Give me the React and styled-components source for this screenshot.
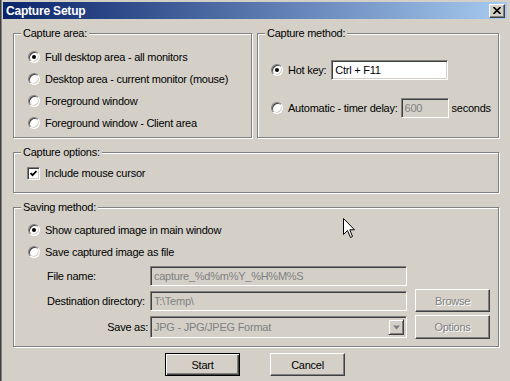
import styled, { createGlobalStyle } from "styled-components";

const GlobalStyle = createGlobalStyle`
	body {
		margin: 0;
		background: #d4d0c8;
	}
	* {
		box-sizing: border-box;
	}
`

const Window = styled.div`
	position: relative;
	width: 510px;
	height: 381px;
	overflow: hidden;
	background: #d4d0c8;
	padding-top: 2px;
	box-shadow: inset 1px 0 0 #404040, inset 2px 0 0 #808080;
	font-family: "Liberation Sans", Arial, sans-serif;
	font-size: 11px;
	letter-spacing: -0.25px;
	color: #000;
`

const TitleBar = styled.div`
	display: flex;
	align-items: center;
	justify-content: space-between;
	height: 17px;
	margin: 0 3px;
	padding: 0 2px 0 3px;
	background: linear-gradient(to right, #0a246a, #a6caf0);
`

const Title = styled.span`
	color: #fff;
	font-weight: bold;
	font-size: 12px;
	letter-spacing: -0.2px;
`

const CloseButton = styled.div`
	display: flex;
	align-items: center;
	justify-content: center;
	width: 16px;
	height: 14px;
	background: #d4d0c8;
	border: 1px solid;
	border-color: #fff #404040 #404040 #fff;
	box-shadow: inset -1px -1px 0 #808080;
`

const Body = styled.div`
	display: flex;
	flex-direction: column;
	gap: 14px;
	padding: 14px 0 0 13px;
`

const TopRow = styled.div`
	display: flex;
	gap: 5px;
`

const Group = styled.div`
	position: relative;
	width: ${props => props.w}px;
	height: ${props => props.h}px;
	padding: ${props => props.pad};
	border: 1px solid #808080;
	box-shadow: 1px 1px 0 #fff, inset 1px 1px 0 #fff;
`

const GroupLabel = styled.span`
	position: absolute;
	top: -7px;
	left: 7px;
	padding: 0 2px;
	line-height: 13px;
	background: #d4d0c8;
`

const OptionRow = styled.div`
	display: flex;
	align-items: center;
	height: 22px;
	gap: ${props => props.gap || 5}px;
	margin-top: ${props => props.mt || 0}px;
`

const Radio = styled.span`
	position: relative;
	flex: none;
	width: 12px;
	height: 12px;
	border-radius: 50%;
	border: 1px solid;
	border-color: #808080 #fff #fff #808080;
	background: #fff;
	box-shadow: inset 1px 1px 0 #404040, inset -1px -1px 0 #d4d0c8;

	&::after {
		content: "";
		display: ${props => props.checked ? "block" : "none"};
		position: absolute;
		left: 3px;
		top: 3px;
		width: 4px;
		height: 4px;
		border-radius: 50%;
		background: #000;
	}
`

const Checkbox = styled.span`
	display: flex;
	align-items: center;
	justify-content: center;
	flex: none;
	width: 13px;
	height: 13px;
	border: 1px solid;
	border-color: #808080 #fff #fff #808080;
	background: #fff;
	box-shadow: inset 1px 1px 0 #404040, inset -1px -1px 0 #d4d0c8;
`

const TextBox = styled.div`
	position: relative;
	display: flex;
	align-items: center;
	flex: none;
	width: ${props => props.w ? props.w + "px" : "auto"};
	height: ${props => props.h || 20}px;
	padding: 0 3px;
	border: 1px solid;
	border-color: #808080 #fff #fff #808080;
	box-shadow: inset 1px 1px 0 #404040, inset -1px -1px 0 #d4d0c8;
	background: ${props => props.disabled ? "#d4d0c8" : "#fff"};
	color: ${props => props.disabled ? "#808080" : "#000"};
	white-space: nowrap;
	overflow: hidden;
`

const DropArrow = styled.span`
	position: absolute;
	right: 2px;
	top: 2px;
	bottom: 2px;
	width: 16px;
	display: flex;
	align-items: center;
	justify-content: center;
	background: #d4d0c8;
	border: 1px solid;
	border-color: #d4d0c8 #404040 #404040 #d4d0c8;
	box-shadow: inset 1px 1px 0 #fff, inset -1px -1px 0 #808080;
`

const Button = styled.div`
	display: flex;
	align-items: center;
	justify-content: center;
	width: 75px;
	height: ${props => props.h || 23}px;
	justify-self: end;
	background: #d4d0c8;
	border: 1px solid;
	border-color: ${props => props.isDefault ? "#000" : "#fff #404040 #404040 #fff"};
	box-shadow: ${props => props.isDefault
		? "inset 1px 1px 0 #fff, inset -1px -1px 0 #404040, inset -2px -2px 0 #808080"
		: "inset -1px -1px 0 #808080"};
	color: ${props => props.disabled ? "#808080" : "#000"};
	text-shadow: ${props => props.disabled ? "1px 1px 0 #fff" : "none"};
`

const FileGrid = styled.div`
	display: grid;
	grid-template-columns: 103px 257px 83px;
	grid-template-rows: 20px 23px 24px;
	row-gap: 3px;
	align-items: center;
	margin: 3px 0 0 19px;

	& > :nth-child(3n + 1) {
		white-space: nowrap;
	}
`

const RightLabel = styled.span`
	justify-self: end;
	padding-right: 2px;
`

const ButtonRow = styled.div`
	display: flex;
	justify-content: center;
	gap: 30px;
	margin-top: -8px;
	padding-right: 13px;
`

const Cursor = styled.svg`
	position: absolute;
	left: 343px;
	top: 218px;
`

function Option({ checked, children })
{
	return (
		<OptionRow>
			<Radio checked={checked} />
			{children}
		</OptionRow>
	)
}

export default function App()
{
	return (
		<Window>
			<GlobalStyle />
			<TitleBar>
				<Title>Capture Setup</Title>
				<CloseButton>
					<svg width="8" height="7" viewBox="0 0 8 7">
						<path d="M0.5 0 L7.5 7 M7.5 0 L0.5 7" stroke="#000" strokeWidth="1.6" />
					</svg>
				</CloseButton>
			</TitleBar>
			<Body>
				<TopRow>
					<Group w={239} h={105} pad="12px 0 0 14px">
						<GroupLabel>Capture area:</GroupLabel>
						<Option checked>Full desktop area - all monitors</Option>
						<Option>Desktop area - current monitor (mouse)</Option>
						<Option>Foreground window</Option>
						<Option>Foreground window - Client area</Option>
					</Group>
					<Group w={242} h={105} pad="25px 0 0 13px">
						<GroupLabel>Capture method:</GroupLabel>
						<OptionRow>
							<Radio checked />
							<span>Hot key:</span>
							<TextBox w={117}>Ctrl + F11</TextBox>
						</OptionRow>
						<OptionRow gap={3} mt={16}>
							<Radio />
							<span style={{ marginLeft: 2 }}>Automatic - timer delay:</span>
							<TextBox w={48} disabled>600</TextBox>
							<span>seconds</span>
						</OptionRow>
					</Group>
				</TopRow>
				<Group w={486} h={41} pad="9px 0 0 13px">
					<GroupLabel>Capture options:</GroupLabel>
					<OptionRow>
						<Checkbox>
							<svg width="7" height="7" viewBox="0 0 7 7">
								<path d="M0.5 3 L2.5 5.2 L6.5 1" fill="none" stroke="#000" strokeWidth="1.8" />
							</svg>
						</Checkbox>
						<span>Include mouse cursor</span>
					</OptionRow>
				</Group>
				<Group w={486} h={140} pad="11px 0 0 14px">
					<GroupLabel>Saving method:</GroupLabel>
					<Option checked>Show captured image in main window</Option>
					<Option>Save captured image as file</Option>
					<FileGrid>
						<span>File name:</span>
						<TextBox disabled>capture_%d%m%Y_%H%M%S</TextBox>
						<span />
						<span>Destination directory:</span>
						<TextBox disabled>T:\Temp\</TextBox>
						<Button disabled>Browse</Button>
						<RightLabel>Save as:</RightLabel>
						<TextBox disabled h={22}>
							JPG - JPG/JPEG Format
							<DropArrow>
								<svg width="7" height="5" viewBox="0 0 7 5">
									<path d="M0 0.5 L7 0.5 L3.5 4.5 Z" fill="#808080" />
								</svg>
							</DropArrow>
						</TextBox>
						<Button disabled h={24}>Options</Button>
					</FileGrid>
				</Group>
				<ButtonRow>
					<Button isDefault>Start</Button>
					<Button>Cancel</Button>
				</ButtonRow>
			</Body>
			<Cursor width="13" height="21" viewBox="0 0 13 21">
				<path d="M0.5 0.5 L0.5 16.5 L4.5 12.5 L7.5 19.5 L9.5 18.5 L6.8 11.8 L11.5 11.8 Z" fill="#fff" stroke="#000" strokeWidth="1" />
			</Cursor>
		</Window>
	)
}
